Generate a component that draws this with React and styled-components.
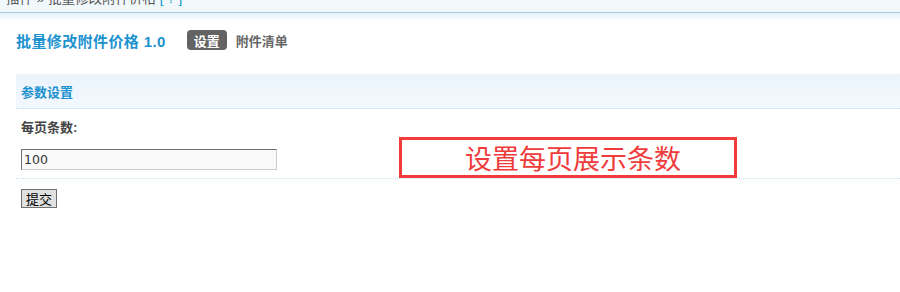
import React from "react";
import styled, { createGlobalStyle } from "styled-components";

const Global = createGlobalStyle`
  html, body { margin: 0; padding: 0; background: #fff; }
  body { font-family: "Liberation Sans", "Noto Sans CJK SC", sans-serif; font-size: 12px; color: #333; }
`;

const Page = styled.div`
  position: relative;
  width: 900px;
  height: 292px;
  overflow: hidden;
`;

const TopBar = styled.div`
  height: 12px;
  overflow: hidden;
  background: #f1f8fb;
  border-bottom: 1px solid #a9cbdb;
`;

const Crumb = styled.div`
  margin: -9px 0 0 6px;
  line-height: 16px;
  font-size: 13.5px;
  color: #555;
  span { color: #09c; }
`;

const Fade = styled.div`
  height: 8px;
  background: linear-gradient(#e4f1f8, #fff);
`;

const Content = styled.div`
  padding-left: 16px;
`;

const TitleRow = styled.div`
  display: flex;
  align-items: center;
  height: 20px;
  margin-top: 9px;
`;

const Title = styled.h3`
  margin: 0 21px 0 0;
  font-size: 15px;
  font-weight: bold;
  color: #1c92cf;
  letter-spacing: 0.4px;
`;

const Tab = styled.span`
  display: inline-flex;
  align-items: center;
  height: 20px;
  padding: 0 ${(p) => (p.$active ? "7px" : "0")};
  margin-right: 9px;
  border-radius: 4px;
  background: ${(p) => (p.$active ? "#636363" : "transparent")};
  color: ${(p) => (p.$active ? "#fff" : "#666")};
  font-weight: bold;
  font-size: 13px;
`;

const SectionHeader = styled.div`
  margin-top: 24px;
  height: 34px;
  display: flex;
  align-items: center;
  padding-left: 5px;
  background: linear-gradient(#ebf4fb, #f3f8fd);
  border-bottom: 1px dotted #c6dfee;
  color: #1c92cf;
  font-weight: bold;
  font-size: 13px;
`;

const LabelRow = styled.div`
  padding: 11px 0 6px 5px;
  line-height: 15px;
  font-weight: bold;
  font-size: 13px;
  color: #444;
`;

const FieldRow = styled.div`
  padding: 8px 0 8px 5px;
  border-bottom: 1px dotted #c6dfee;
  display: flex;
`;

const Input = styled.input`
  box-sizing: border-box;
  width: 256px;
  height: 21px;
  margin: 0;
  padding: 1px 2px;
  background: #f9f9f9;
  border: 1px solid #ccc;
  border-top-color: #707070;
  border-left-color: #707070;
  font-family: "DejaVu Sans", "Liberation Sans", sans-serif;
  font-size: 12.5px;
  color: #333;
  outline: none;
`;

const ButtonRow = styled.div`
  padding: 10px 0 0 5px;
`;

const Submit = styled.button`
  box-sizing: border-box;
  width: 36px;
  height: 19px;
  padding: 0;
  background: #e1e1e1;
  border: 1px solid #707070;
  font-family: "Noto Sans CJK SC", sans-serif;
  font-size: 13px;
  line-height: 15px;
  color: #000;
`;

const Note = styled.div`
  position: absolute;
  left: 399px;
  top: 137px;
  width: 338px;
  height: 41px;
  box-sizing: border-box;
  padding-left: 10px;
  border: 3px solid #f33b3b;
  display: flex;
  align-items: center;
  justify-content: center;
  font-family: "Noto Sans CJK SC", sans-serif;
  font-size: 27px;
  color: #ef3b3b;
  line-height: 1;
`;

export default function App() {
  return (
    <>
      <Global />
      <Page>
        <TopBar>
          <Crumb>插件 » 批量修改附件价格 <span>[ ? ]</span></Crumb>
        </TopBar>
        <Fade />
        <Content>
          <TitleRow>
            <Title>批量修改附件价格 1.0</Title>
            <Tab $active>设置</Tab>
            <Tab>附件清单</Tab>
          </TitleRow>
          <SectionHeader>参数设置</SectionHeader>
          <LabelRow>每页条数:</LabelRow>
          <FieldRow>
            <Input defaultValue="100" />
          </FieldRow>
          <ButtonRow>
            <Submit>提交</Submit>
          </ButtonRow>
        </Content>
        <Note>设置每页展示条数</Note>
      </Page>
    </>
  );
}
